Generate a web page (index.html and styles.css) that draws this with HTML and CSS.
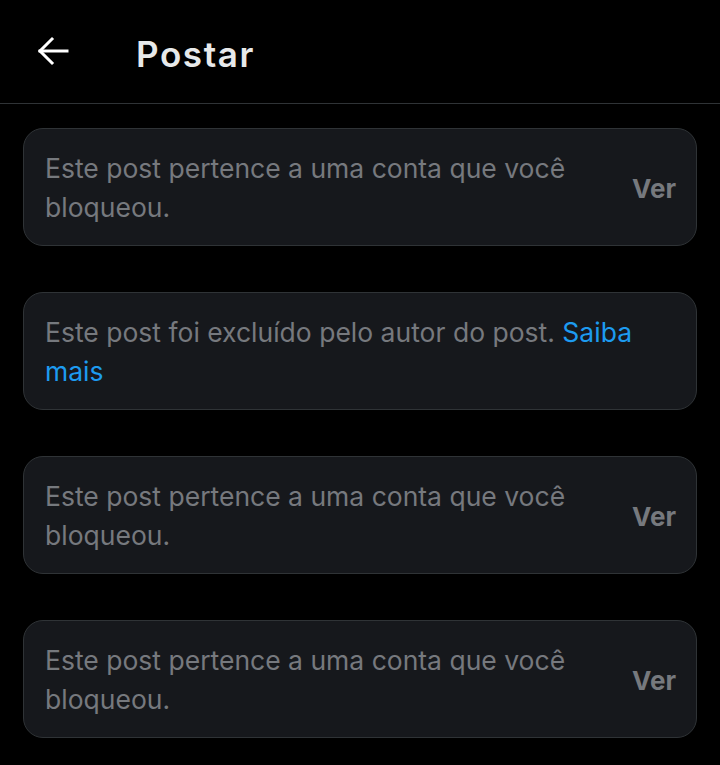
FILE: index.html
```html
<!DOCTYPE html>
<html lang="pt">
<head>
  <meta charset="UTF-8">
  <meta name="viewport" content="width=device-width, initial-scale=1.0">
  <title>Postar</title>
  <link rel="stylesheet" href="styles.css">
</head>
<body>
  <header class="top-bar">
    <button class="back-btn" aria-label="Voltar">
      <svg width="32" height="32" viewBox="0 0 32 32" fill="none" stroke="#fff" stroke-width="3" stroke-linecap="square">
        <path d="M3 16H30"/>
        <path d="M15 4L3 16L15 28"/>
      </svg>
    </button>
    <h1 class="title">Postar</h1>
  </header>
  <div class="post-list">
    <div class="notice">
      <div class="notice-text">Este post pertence a uma conta que você bloqueou.</div>
      <span class="notice-action">Ver</span>
    </div>
    <div class="notice">
      <div class="notice-text">Este post foi excluído pelo autor do post. <span class="link">Saiba mais</span></div>
    </div>
    <div class="notice">
      <div class="notice-text">Este post pertence a uma conta que você bloqueou.</div>
      <span class="notice-action">Ver</span>
    </div>
    <div class="notice">
      <div class="notice-text">Este post pertence a uma conta que você bloqueou.</div>
      <span class="notice-action">Ver</span>
    </div>
  </div>
</body>
</html>
```

FILE: styles.css
```css
body {
  margin: 0;
  background-color: #000;
  font-family: Inter, Roboto, sans-serif;
  color: #e7e9ea;
}
.top-bar {
  height: 104px;
  display: flex;
  align-items: center;
  border-bottom: 1px solid #2f3336;
  box-sizing: border-box;
}
.back-btn {
  background: none;
  border: none;
  padding: 0;
  margin-left: 37px;
  width: 32px;
  height: 32px;
  margin-top: -2px;
}
.title {
  margin: 4px 0 0 67px;
  font-size: 35px;
  font-weight: 600;
  letter-spacing: 1.6px;
  color: #e7e9ea;
}
.post-list {
  display: flex;
  flex-direction: column;
  gap: 46px;
  padding: 24px 23px;
}
.notice {
  display: flex;
  align-items: center;
  gap: 40px;
  min-height: 118px;
  box-sizing: border-box;
  padding: 2px 20px 0 21px;
  background-color: #16181c;
  border: 1px solid #2f3336;
  border-radius: 20px;
}
.notice-text {
  flex: 1;
  font-size: 26.5px;
  line-height: 39px;
  color: #76797e;
}
.notice-action {
  font-size: 26px;
  font-weight: 700;
  color: #76797e;
}
.link {
  color: #1d9bf0;
}
```
